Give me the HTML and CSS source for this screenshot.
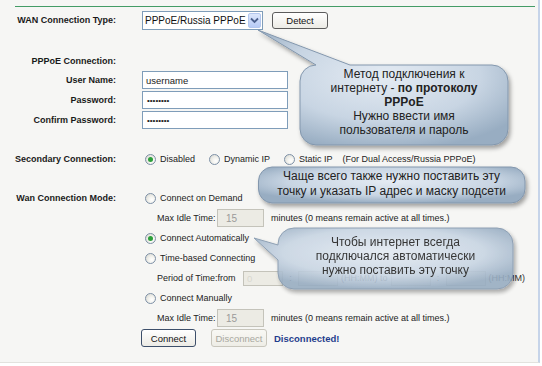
FILE: index.html
```html
<!DOCTYPE html>
<html>
<head>
<meta charset="utf-8">
<link rel="stylesheet" href="styles.css">
</head>
<body>
<div class="page">
  <div class="rule"></div>
  <div class="form">
    <div class="row r-type">
      <div class="lbl">WAN Connection Type:</div>
      <div class="val">
        <div class="select"><span class="sel-text">PPPoE/Russia PPPoE</span><span class="sel-btn"><svg width="9" height="7" viewBox="0 0 9 7"><path d="M1 1.5 L4.5 5 L8 1.5" fill="none" stroke="#4a5f8c" stroke-width="1.8"/></svg></span></div>
        <span class="btn btn-detect">Detect</span>
      </div>
    </div>
    <div class="row r-head"><div class="lbl">PPPoE Connection:</div></div>
    <div class="row"><div class="lbl">User Name:</div><div class="val"><span class="inp">username</span></div></div>
    <div class="row"><div class="lbl">Password:</div><div class="val"><span class="inp pw">&bull;&bull;&bull;&bull;&bull;&bull;&bull;&bull;</span></div></div>
    <div class="row"><div class="lbl">Confirm Password:</div><div class="val"><span class="inp pw">&bull;&bull;&bull;&bull;&bull;&bull;&bull;&bull;</span></div></div>

    <div class="row r-sec">
      <div class="lbl">Secondary Connection:</div>
      <div class="val">
        <span class="opt"><span class="radio on"></span>Disabled</span>
        <span class="opt"><span class="radio"></span>Dynamic IP</span>
        <span class="opt"><span class="radio"></span>Static IP</span>
        <span class="note">(For Dual Access/Russia PPPoE)</span>
      </div>
    </div>

    <div class="row r-mode"><div class="lbl">Wan Connection Mode:</div><div class="val"><span class="opt"><span class="radio"></span>Connect on Demand</span></div></div>
    <div class="row"><div class="lbl"></div><div class="val sub"><span class="sublbl w-idle">Max Idle Time:</span><span class="inp dis idle">15</span><span class="after">minutes (0 means remain active at all times.)</span></div></div>
    <div class="row"><div class="lbl"></div><div class="val"><span class="opt"><span class="radio on"></span>Connect Automatically</span></div></div>
    <div class="row"><div class="lbl"></div><div class="val"><span class="opt"><span class="radio"></span>Time-based Connecting</span></div></div>
    <div class="row"><div class="lbl"></div><div class="val sub"><span class="sublbl w-period">Period of Time:from</span><span class="inp dis tm first">0</span><span class="colon">:</span><span class="inp dis tm"></span><span class="hh">(HH:MM) to</span><span class="inp dis tm"></span><span class="colon">:</span><span class="inp dis tm"></span><span class="hh">(HH:MM)</span></div></div>
    <div class="row"><div class="lbl"></div><div class="val"><span class="opt"><span class="radio"></span>Connect Manually</span></div></div>
    <div class="row"><div class="lbl"></div><div class="val sub"><span class="sublbl w-idle">Max Idle Time:</span><span class="inp dis idle">15</span><span class="after">minutes (0 means remain active at all times.)</span></div></div>
    <div class="row r-btns"><div class="lbl"></div><div class="val"><span class="btn btn-conn">Connect</span><span class="btn btn-dis">Disconnect</span><span class="status">Disconnected!</span></div></div>
  </div>

  <div class="bubble b1">
    <svg class="shape" width="270" height="130" viewBox="0 0 270 130">
      <defs>
        <radialGradient id="g1" cx="50%" cy="40%" r="65%">
          <stop offset="0" stop-color="#e4ebf3"/>
          <stop offset="0.6" stop-color="#c8d5e3"/>
          <stop offset="1" stop-color="#98adc2"/>
        </radialGradient>
        <filter id="f1" x="-10%" y="-10%" width="120%" height="130%"><feDropShadow dx="2" dy="3" stdDeviation="2" flood-color="#000" flood-opacity="0.35"/></filter>
      </defs>
      <path d="M66 40 L8 5 L100 40 H242 A16 16 0 0 1 258 56 V104 A16 16 0 0 1 242 120 H66 A16 16 0 0 1 50 104 V56 A16 16 0 0 1 66 40 Z" fill="url(#g1)" stroke="#8397ad" stroke-width="1" filter="url(#f1)"/>
    </svg>
    <div class="btext t1">Метод подключения к<br>интернету - <b>по протоколу<br>PPPoE</b><br>Нужно ввести имя<br>пользователя и пароль</div>
  </div>

  <div class="bubble b2">
    <svg class="shape" width="280" height="50" viewBox="0 0 280 50">
      <defs>
        <radialGradient id="g2" cx="50%" cy="40%" r="60%">
          <stop offset="0" stop-color="#e4ebf3"/>
          <stop offset="0.65" stop-color="#c8d5e3"/>
          <stop offset="1" stop-color="#98adc2"/>
        </radialGradient>
        <filter id="f2" x="-10%" y="-20%" width="120%" height="160%"><feDropShadow dx="2" dy="3" stdDeviation="2" flood-color="#000" flood-opacity="0.35"/></filter>
      </defs>
      <path d="M14 2 H253 A14 14 0 0 1 267 16 V24 A14 14 0 0 1 253 38 H14 A14 14 0 0 1 0.5 24 V16 A14 14 0 0 1 14 2 Z" fill="url(#g2)" stroke="#8397ad" stroke-width="1" filter="url(#f2)"/>
    </svg>
    <div class="btext t2">Чаще всего также нужно поставить эту<br>точку и указать IP адрес и маску подсети</div>
  </div>

  <div class="bubble b3">
    <svg class="shape" width="270" height="75" viewBox="0 0 270 75">
      <defs>
        <radialGradient id="g3" cx="50%" cy="40%" r="60%">
          <stop offset="0" stop-color="#e4ebf3"/>
          <stop offset="0.65" stop-color="#c8d5e3"/>
          <stop offset="1" stop-color="#98adc2"/>
        </radialGradient>
        <filter id="f3" x="-10%" y="-20%" width="120%" height="150%"><feDropShadow dx="2" dy="3" stdDeviation="2" flood-color="#000" flood-opacity="0.35"/></filter>
      </defs>
      <path d="M41 3 H244 A16 16 0 0 1 260 19 V48 A16 16 0 0 1 244 64 H41 A16 16 0 0 1 25 48 V35 L1 13 L25 20 V19 A16 16 0 0 1 41 3 Z" fill="url(#g3)" stroke="#8397ad" stroke-width="1" filter="url(#f3)"/>
    </svg>
    <div class="btext t3">Чтобы интернет всегда<br>подключался автоматически<br>нужно поставить эту точку</div>
  </div>
</div>
</body>
</html>
```

FILE: styles.css
```css
* { box-sizing: border-box; }
html, body { margin: 0; padding: 0; }
body {
  width: 542px;
  height: 366px;
  background: #ffffff;
  font-family: "Liberation Sans", Arial, sans-serif;
  font-size: 9px;
  color: #222;
  overflow: hidden;
}
.page {
  position: relative;
  width: 540px;
  height: 363px;
  background: #f6f6f4;
  border-right: 2px solid #c6d4e9;
  border-bottom: 1px solid #e2e2de;
  padding-top: 6px;
}
.rule {
  margin-left: 15px;
  width: 520px;
  height: 1px;
  background: #449c66;
  margin-bottom: 3px;
}
.row {
  display: flex;
  align-items: center;
  height: 20px;
}
.lbl {
  width: 116px;
  flex: none;
  text-align: right;
  font-weight: bold;
  margin-right: 26px;
  color: #1a1a1a;
}
.val {
  display: flex;
  align-items: center;
  white-space: nowrap;
}
.r-head { margin-top: 22px; height: 18px; }
.r-sec { margin-top: 19px; }
.r-mode { margin-top: 19px; }

.select {
  width: 121px;
  height: 19px;
  border: 1px solid #7f9db9;
  background: #fff;
  display: flex;
  align-items: center;
  justify-content: space-between;
  padding-left: 2px;
}
.sel-text { font-size: 10px; color: #111; }
.sel-btn {
  width: 13px;
  height: 15px;
  margin-right: 1px;
  border: 1px solid #b3c7ee;
  border-radius: 2px;
  background: linear-gradient(#dbe6fc, #b7cbf5);
  display: flex;
  align-items: center;
  justify-content: center;
}
.btn {
  display: inline-flex;
  align-items: center;
  justify-content: center;
  height: 17px;
  border: 1px solid #5c5c5c;
  border-radius: 3px;
  background: linear-gradient(#ffffff, #ecebe5);
  font-size: 9.5px;
  color: #111;
}
.btn-detect { width: 56px; margin-left: 9px; }
.inp {
  display: inline-flex;
  align-items: center;
  width: 146px;
  height: 18px;
  border: 1px solid #7f9db9;
  background: #fff;
  padding-left: 3px;
  font-size: 9.5px;
  color: #222;
}
.inp.pw { font-size: 8px; letter-spacing: 0; padding-left: 4px; }

.opt { display: inline-flex; align-items: center; margin-right: 11px; }
.radio {
  position: relative;
  display: inline-block;
  width: 11px;
  height: 11px;
  border-radius: 50%;
  border: 1px solid #7d90a6;
  background: radial-gradient(circle at 65% 65%, #ffffff 0, #f4f4f0 35%, #d4d4cc 100%);
  margin: 0 4px 0 3px;
}
.radio.on::after {
  content: "";
  position: absolute;
  left: 2px;
  top: 2px;
  width: 5px;
  height: 5px;
  border-radius: 50%;
  background: #2c9f3a;
}
.note { margin-left: -1px; }

.sub { padding-left: 15px; }
.sublbl { flex: none; }
.w-idle { width: 60px; }
.w-period { width: 86px; }
.inp.dis {
  background: #ecebe4;
  border-color: #c4c3ba;
  color: #9a9a9a;
}
.inp.idle { width: 47px; height: 18px; padding-left: 8px; font-size: 10px; }
.after { margin-left: 7px; }
.inp.tm { width: 40px; height: 15px; color: #d8d8d0; }
.colon { width: 15px; text-align: center; }
.hh { margin: 0 3px 0 3px; color: #333; }

.btn-conn { width: 55px; height: 18px; margin-left: -1px; border-color: #3d4f6a; }
.btn-dis {
  width: 56px;
  height: 18px;
  margin-left: 15px;
  border-color: #c8c6bc;
  color: #a8a8a0;
  background: linear-gradient(#f8f8f4, #eeede6);
}
.status { margin-left: 7px; font-weight: bold; color: #1f3d8d; font-size: 9.5px; }

.bubble { position: absolute; }
.bubble .shape { position: absolute; left: 0; top: 0; overflow: visible; }
.btext {
  position: absolute;
  text-align: center;
  font-size: 12px;
  color: #222;
}
.b1 { left: 250px; top: 25px; width: 270px; height: 130px; }
.t1 { left: 50px; top: 42px; width: 208px; line-height: 14px; }
.b2 { left: 258px; top: 165px; width: 280px; height: 50px; }
.t2 { left: 0; top: 4px; width: 267px; line-height: 15px; }
.b3 { left: 253px; top: 225px; width: 270px; height: 75px; opacity: 0.9; }
.t3 { left: 25px; top: 10px; width: 235px; line-height: 14px; }
```
